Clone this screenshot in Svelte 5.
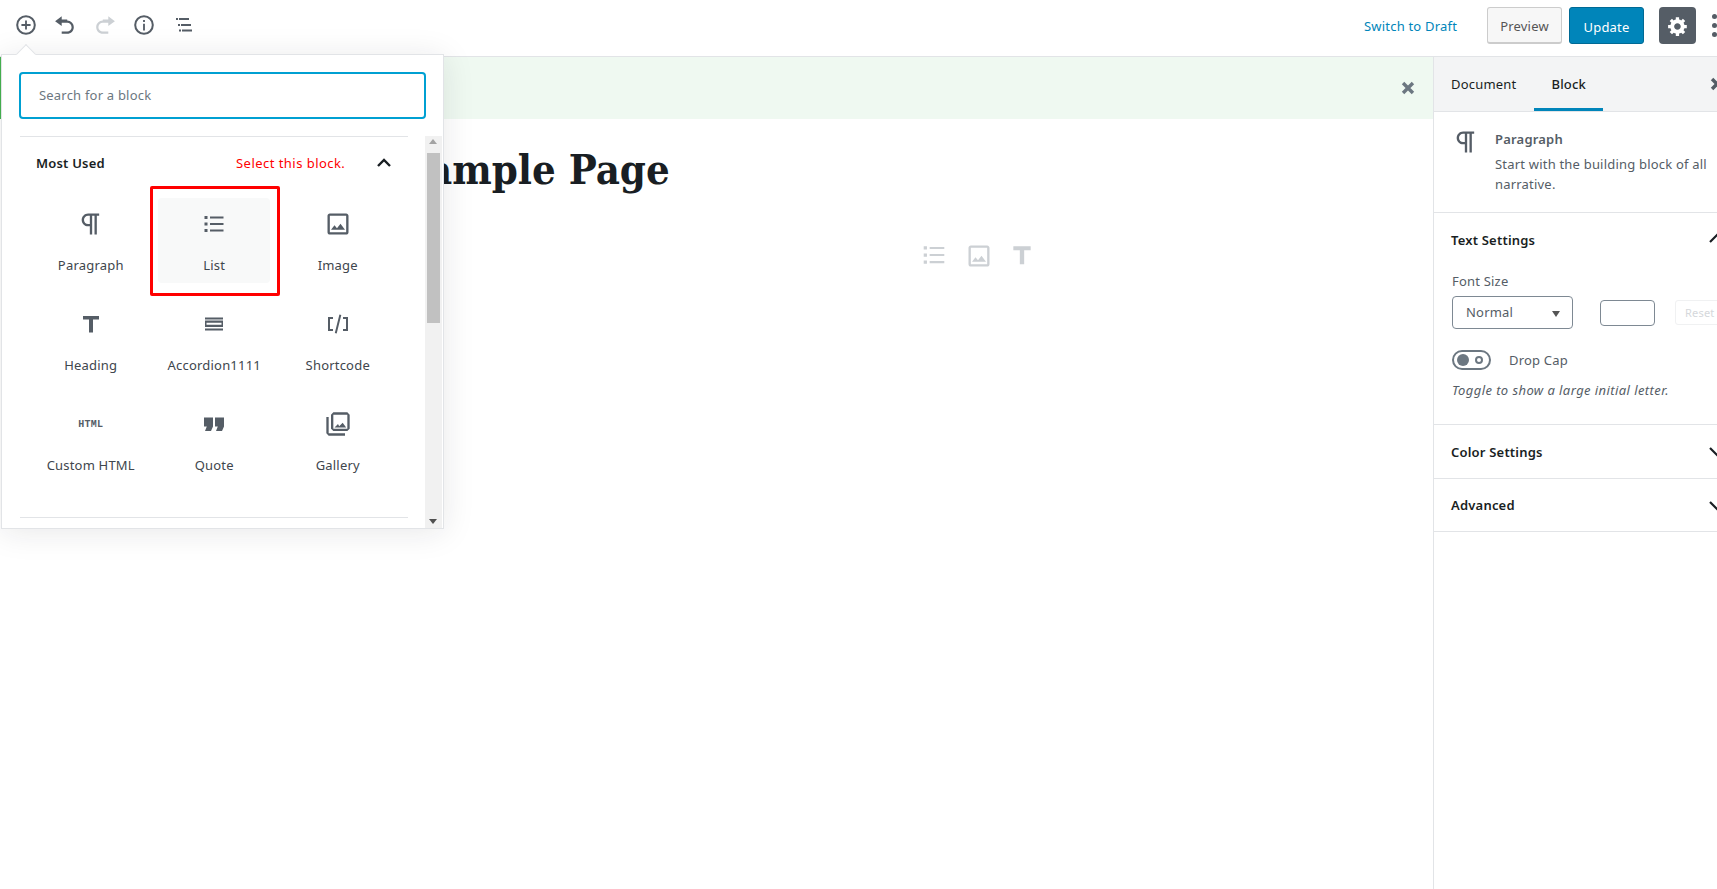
<script>
const blocks = [
  { name: 'Paragraph', icon: 'paragraph' },
  { name: 'List', icon: 'list', active: true },
  { name: 'Image', icon: 'image' },
  { name: 'Heading', icon: 'heading' },
  { name: 'Accordion1111', icon: 'accordion' },
  { name: 'Shortcode', icon: 'shortcode' },
  { name: 'Custom HTML', icon: 'html' },
  { name: 'Quote', icon: 'quote' },
  { name: 'Gallery', icon: 'gallery' }
]
</script>

{#snippet glyph(name)}
  {#if name === 'paragraph'}
    <svg class="i24 big" viewBox="0 0 24 24"><path d="M11 5v7H9.5C7.6 12 6 10.4 6 8.5S7.6 5 9.5 5H11m8-2H9.5C6.5 3 4 5.5 4 8.5S6.5 14 9.5 14H11v7h2V5h2v16h2V5h2V3z"/></svg>
  {:else if name === 'list'}
    <svg class="i24" viewBox="0 0 24 24"><path d="M2.500 4h3v3h-3zM2.500 10.500h3v3h-3zM2.500 17h3v3h-3zM8 4.500h13.500v2H8zM8 11h13.500v2H8zM8 17.500h13.500v2H8z"/></svg>
  {:else if name === 'image'}
    <svg class="i24 big" viewBox="0 0 24 24"><path d="m19 5v14h-14v-14h14m0-2h-14c-1.100 0-2 .9-2 2v14c0 1.100.9 2 2 2h14c1.100 0 2-.9 2-2v-14c0-1.100-.9-2-2-2z"/><path d="m14.140 11.860l-3 3.870-2.140-2.590-3 3.860h12l-3.860-5.140z"/></svg>
  {:else if name === 'heading'}
    <svg class="i24" viewBox="0 0 24 24"><path d="M4 4v3.500h6v13h4v-13h6V4z"/></svg>
  {:else if name === 'accordion'}
    <svg class="i24" viewBox="0 0 24 24"><path fill-rule="evenodd" d="M3 5.500h18v2H3zM3 16.500h18v2H3zM3 8.500h18v6.500H3zM4.500 10.700v2h15v-2z"/></svg>
  {:else if name === 'shortcode'}
    <svg class="i24" viewBox="0 0 24 24"><path d="M10.700 21.500l-1.900-.5 4.600-18.500 1.900.5zM2 5h5v2H4v10h3v2H2zM22 5h-5v2h3v10h-3v2h5z"/></svg>
  {:else if name === 'html'}
    <span class="htmlmark">HTML</span>
  {:else if name === 'quote'}
    <svg class="i24" viewBox="0 0 24 24"><path d="M2 5.500h9v9l-2 4.500H3l1.800-4.500H2zM13 5.500h9v9l-2 4.500h-6l1.800-4.500H13z"/></svg>
  {:else if name === 'gallery'}
    <svg class="i24 big" viewBox="0 0 24 24"><path d="M20 4v12H8V4h12m0-2H8L6 4v12l2 2h12l2-2V4l-2-2z"/><path d="M12 12l1 2 3-3 3 4H9z"/><path d="M2 6v14l2 2h14v-2H4V6H2z"/></svg>
  {/if}
{/snippet}

{#snippet cross()}
  <path d="M4.500 4.500l11 11M15.500 4.500l-11 11" fill="none" stroke="currentColor" stroke-width="3.800"/>
{/snippet}

<div class="app">
  <header class="topbar">
    <div class="tools">
      <svg class="tool" viewBox="0 0 24 24"><circle cx="12" cy="12" r="9.600" fill="none" stroke="currentColor" stroke-width="2.200"/><path d="M11 7h2v4h4v2h-4v4h-2v-4H7v-2h4z"/></svg>
      <svg class="tool" viewBox="0 0 20 20"><path d="M12 5H7V2L1 6.500 7 11V8h5c2.200 0 4 1.800 4 4s-1.800 4-4 4H7v2h5c3.300 0 6-2.700 6-6s-2.700-6-6-6z"/></svg>
      <svg class="tool off" viewBox="0 0 20 20"><path d="M8 5h5V2l6 4.500-6 4.500V8H8c-2.200 0-4 1.800-4 4s1.800 4 4 4h5v2H8c-3.300 0-6-2.700-6-6s2.700-6 6-6z"/></svg>
      <svg class="tool" viewBox="0 0 24 24"><circle cx="12" cy="12" r="9.600" fill="none" stroke="currentColor" stroke-width="2.200"/><path d="M11 10.500h2V18h-2zM11 6.500h2v2.200h-2z"/></svg>
      <svg class="tool" viewBox="0 0 22 22"><path d="M4 4h2v2H4zM7 4h10v2H7zM6 10h2v2H6zM9 10h10v2H9zM7 15.500h2v2H7zM10 15.500h10v2H10z"/></svg>
    </div>
    <div class="actions">
      <a class="draft" href="#top">Switch to Draft</a>
      <button class="btn preview">Preview</button>
      <button class="btn update">Update</button>
      <button class="gear" aria-label="Settings">
        <svg viewBox="0 0 20 20"><path d="M18 12h-2.180c-.170.700-.440 1.350-.810 1.930l1.540 1.540-2.100 2.100-1.540-1.540c-.580.360-1.230.630-1.910.790V19H8v-2.180c-.680-.160-1.330-.430-1.910-.790l-1.540 1.540-2.120-2.120 1.540-1.540c-.360-.580-.630-1.230-.790-1.910H1V9.030h2.170c.160-.700.440-1.350.800-1.940L2.430 5.550l2.100-2.100 1.540 1.540c.580-.370 1.240-.640 1.930-.810V2h3v2.180c.680.160 1.330.430 1.910.790l1.540-1.540 2.120 2.120-1.540 1.540c.360.590.640 1.240.800 1.940H18V12zm-8.500 1.500c1.660 0 3-1.340 3-3s-1.340-3-3-3-3 1.340-3 3 1.340 3 3 3z"/></svg>
      </button>
      <div class="dots"><i></i><i></i><i></i></div>
    </div>
  </header>

  <div class="body">
    <main class="editor">
      <div class="notice">
        <svg class="notice-x" viewBox="0 0 20 20">{@render cross()}</svg>
      </div>
      <h1 class="title">Sample Page</h1>
      <div class="ghost">
        {@render glyph('list')}
        {@render glyph('image')}
        {@render glyph('heading')}
      </div>
    </main>

    <aside class="sidebar">
      <div class="tabs">
        <span class="tab">Document</span>
        <span class="tab on">Block</span>
        <svg class="tabs-x" viewBox="0 0 20 20">{@render cross()}</svg>
      </div>
      <div class="card">
        {@render glyph('paragraph')}
        <div>
          <div class="card-title">Paragraph</div>
          <div class="card-desc">Start with the building block of all narrative.</div>
        </div>
      </div>
      <section class="panel">
        <div class="panel-head"><span>Text Settings</span><svg class="chev" viewBox="0 0 20 20"><path d="M3 13l7-7 7 7" /></svg></div>
        <div class="panel-body">
          <div class="label">Font Size</div>
          <div class="size-row">
            <div class="select">Normal<span class="caret"></span></div>
            <div class="num"></div>
            <div class="reset">Reset</div>
          </div>
          <div class="toggle-row">
            <span class="toggle"><i class="knob"></i><i class="ring"></i></span>
            <span class="toggle-label">Drop Cap</span>
          </div>
          <div class="help">Toggle to show a large initial letter.</div>
        </div>
      </section>
      <section class="panel closed">
        <div class="panel-head"><span>Color Settings</span><svg class="chev" viewBox="0 0 20 20"><path d="M3 7l7 7 7-7" /></svg></div>
      </section>
      <section class="panel closed">
        <div class="panel-head"><span>Advanced</span><svg class="chev" viewBox="0 0 20 20"><path d="M3 7l7 7 7-7" /></svg></div>
      </section>
    </aside>
  </div>

  <div class="popover">
    <div class="search">Search for a block</div>
    <div class="list">
      <div class="list-inner">
        <div class="group-head">
          <span class="group-title">Most Used</span>
          <span class="hint">Select this block.</span>
          <svg class="group-chev" viewBox="0 0 20 20"><path d="M4 13l6-6 6 6" /></svg>
        </div>
        <div class="grid">
          {#each blocks as b}
            <div class="item" class:active={b.active}>
              <div class="item-icon">{@render glyph(b.icon)}</div>
              <div class="item-name">{b.name}</div>
            </div>
          {/each}
        </div>
      </div>
      <div class="scroll">
        <span class="arrow up"></span>
        <span class="thumb"></span>
        <span class="arrow down"></span>
      </div>
    </div>
  </div>
</div>

<style>
:global(body) {
  margin: 0;
  background: #fff;
}
.app {
  position: relative;
  width: 1717px;
  height: 889px;
  overflow: hidden;
  font-family: "Noto Sans", sans-serif;
  font-size: 13px;
  letter-spacing: .2px;
  color: #191e23;
}
svg { fill: currentColor; display: block; }

.topbar {
  display: flex;
  justify-content: space-between;
  height: 57px;
  box-sizing: border-box;
  padding-bottom: 5px;
  border-bottom: 1px solid #e2e4e7;
}
.tools {
  display: flex;
  align-items: center;
  gap: 17.300px;
  padding-left: 15px;
  padding-bottom: 1px;
  color: #555d66;
}
.tool { width: 22px; height: 22px; }
.tool.off { color: #ccd0d4; }
.actions {
  display: flex;
  align-items: center;
  width: 353px;
  flex: none;
}
.draft { color: #0085ba; text-decoration: none; width: 123px; }
.btn {
  width: 75px;
  height: 37px;
  box-sizing: border-box;
  border-radius: 3px;
  font: inherit;
  letter-spacing: inherit;
  padding: 2px 0 0;
}
.preview {
  background: #f7f7f7;
  border: 1px solid #ccc;
  border-bottom-width: 2px;
  color: #555;
  margin-right: 7px;
}
.update {
  background: #0085ba;
  border: 1px solid #006a95;
  color: #fff;
}
.gear {
  width: 37px;
  height: 37px;
  margin-left: 15px;
  padding: 0;
  border: 0;
  border-radius: 4px;
  background: #555d66;
  color: #fff;
  display: flex;
  align-items: center;
  justify-content: center;
}
.gear svg { width: 22px; height: 22px; }
.dots { margin-left: 16px; display: grid; gap: 4px; }
.dots i { display: block; width: 5px; height: 5px; border-radius: 50%; background: #555d66; }

.body { display: flex; height: 832px; }
.editor { flex: 0 0 1433px; box-sizing: border-box; }
.notice {
  height: 62px;
  background: #eff9f1;
  border-left: 4px solid #46b450;
  display: flex;
  align-items: center;
  justify-content: flex-end;
  padding-right: 16px;
  color: #6c7781;
}
.notice-x { width: 18px; height: 18px; }
.title {
  margin: 21px 0 0 401px;
  font-family: "DejaVu Serif Condensed", "DejaVu Serif", serif;
  font-weight: 700;
  font-size: 41.500px;
  line-height: 60px;
  letter-spacing: 0;
  color: #191e23;
}
.ghost {
  display: flex;
  gap: 18px;
  margin: 42px 0 0 921px;
  color: #ccd0d4;
}
.ghost .i24 { width: 26px; height: 26px; }
.ghost .i24:last-child { margin-left: -2px; }

.sidebar {
  flex: 0 0 300px;
  border-left: 1px solid #e2e4e7;
  box-sizing: border-box;
}
.tabs {
  position: relative;
  display: flex;
  height: 55px;
  box-sizing: border-box;
  background: #f3f4f5;
  border-bottom: 1px solid #e2e4e7;
}
.tab {
  display: flex;
  align-items: center;
  padding: 0 17px;
  height: 54px;
  box-sizing: border-box;
}
.tab.on {
  margin-left: 1px;
  font-weight: 500;
  border-bottom: 3px solid #0085ba;
  padding-top: 3px;
}
.tabs-x { position: absolute; left: 274px; top: 18px; width: 18px; height: 18px; color: #555d66; }
.card {
  display: flex;
  gap: 15px;
  padding: 16px 20px 16px 18px;
  height: 101px;
  box-sizing: border-box;
  border-bottom: 1px solid #e2e4e7;
  color: #555d66;
}
.card .i24 { width: 28px; height: 28px; flex: none; }
.card-title { font-weight: 600; line-height: 20px; margin: 1px 0 5px; }
.card-desc { line-height: 20px; width: 228px; }
.panel {
  padding: 0 16px 0 17px;
  border-bottom: 1px solid #e2e4e7;
  height: 212px;
  box-sizing: border-box;
}
.panel.closed { height: 53.500px; }
.panel-head {
  position: relative;
  display: flex;
  align-items: center;
  height: 53px;
  font-weight: 600;
}
.panel-body { padding-left: 1px; }
.chev {
  position: absolute;
  left: 256px;
  top: 16px;
  width: 20px;
  height: 20px;
  fill: none;
  stroke: #191e23;
  stroke-width: 2.200;
}
.label { margin-top: 6px; color: #555d66; line-height: 18px; }
.size-row { display: flex; align-items: center; margin-top: 6px; }
.select {
  position: relative;
  width: 121px;
  height: 33px;
  box-sizing: border-box;
  border: 1px solid #7e8993;
  border-radius: 4px;
  padding-left: 13px;
  line-height: 31px;
  color: #555d66;
}
.caret {
  position: absolute;
  right: 12px;
  top: 14px;
  border: 4px solid transparent;
  border-top: 6px solid #555;
  border-bottom: 0;
}
.num {
  width: 55px;
  height: 26px;
  box-sizing: border-box;
  margin-left: 27px;
  border: 1px solid #7e8993;
  border-radius: 4px;
}
.reset {
  width: 60px;
  height: 25px;
  box-sizing: border-box;
  margin-left: 20px;
  border: 1px solid #f0f1f2;
  border-radius: 3px;
  padding-left: 9px;
  font-size: 11px;
  line-height: 23px;
  color: #d5d8db;
}
.toggle-row { display: flex; align-items: center; margin-top: 21px; gap: 18px; color: #555d66; }
.toggle {
  position: relative;
  display: block;
  width: 39px;
  height: 20px;
  box-sizing: border-box;
  border: 2px solid #6c7781;
  border-radius: 10px;
}
.knob { position: absolute; left: 3px; top: 2px; width: 12px; height: 12px; border-radius: 50%; background: #6c7781; }
.ring { position: absolute; right: 6px; top: 4px; width: 8px; height: 8px; box-sizing: border-box; border: 2px solid #6c7781; border-radius: 50%; }
.help { margin-top: 11px; font-style: italic; color: #555d66; letter-spacing: .42px; line-height: 18px; }

.popover {
  position: absolute;
  left: 1px;
  top: 54px;
  width: 443px;
  height: 475px;
  box-sizing: border-box;
  background: #fff;
  border: 1px solid #e2e4e7;
  box-shadow: 0 3px 30px rgba(25, 30, 35, .1);
}
.popover::before {
  content: "";
  position: absolute;
  left: 17px;
  top: -8px;
  width: 13px;
  height: 13px;
  background: #fff;
  border-left: 1px solid #e2e4e7;
  border-top: 1px solid #e2e4e7;
  transform: rotate(45deg);
}
.search {
  margin: 17px 17px 17px 17px;
  height: 47px;
  box-sizing: border-box;
  border: 2px solid #00a0d2;
  border-radius: 4px;
  padding-left: 18px;
  line-height: 43px;
  color: #6c7781;
  position: relative;
}
.list {
  position: relative;
  display: flex;
  height: 392px;
}
.list-inner {
  width: 388px;
  margin-left: 18px;
  border-top: 1px solid #e2e4e7;
  border-bottom: 1px solid #e2e4e7;
  height: 382px;
  box-sizing: border-box;
}
.scroll {
  position: absolute;
  right: 1px;
  top: 0;
  bottom: 0;
  width: 17px;
  background: #f1f1f1;
}
.arrow { position: absolute; left: 4px; border: 4px solid transparent; }
.arrow.up { top: 3px; border-top: 0; border-bottom: 5px solid #a3a3a3; }
.arrow.down { bottom: 4px; border-bottom: 0; border-top: 5px solid #505050; }
.thumb { position: absolute; top: 17px; left: 2px; width: 13px; height: 170px; background: #c1c1c1; }
.group-head {
  position: relative;
  height: 61px;
  padding: 17px 0 0 16px;
  box-sizing: border-box;
  line-height: 18px;
}
.group-title { font-weight: 600; }
.hint { position: absolute; left: 216px; color: #f00; letter-spacing: .46px; }
.group-chev {
  position: absolute;
  left: 354px;
  top: 16px;
  width: 20px;
  height: 20px;
  fill: none;
  stroke: #191e23;
  stroke-width: 2.400;
}
.grid {
  display: grid;
  grid-template-columns: repeat(3, 123.500px);
  grid-auto-rows: 100px;
  margin-left: 9px;
}
.item {
  position: relative;
  display: flex;
  flex-direction: column;
  align-items: center;
  color: #555d66;
  padding-top: 11px;
  box-sizing: border-box;
}
.item.active::before {
  content: "";
  position: absolute;
  left: 5px;
  right: 6px;
  top: 0;
  height: 85px;
  background: #f8f9f9;
  border-radius: 4px;
}
.item.active::after {
  content: "";
  position: absolute;
  left: -3px;
  top: -12px;
  width: 130px;
  height: 110px;
  box-sizing: border-box;
  border: 3px solid #f00;
  border-radius: 2px;
}
.item-icon {
  position: relative;
  width: 24px;
  height: 30px;
  display: flex;
  align-items: center;
  justify-content: center;
}
.i24 { width: 24px; height: 24px; flex: none; }
.i24.big { width: 28px; height: 28px; }
.htmlmark {
  font-family: "Liberation Mono", monospace;
  font-weight: 700;
  font-size: 10px;
  letter-spacing: .3px;
  color: #555d66;
}
.item-name { position: relative; margin-top: 17px; color: #40464d; line-height: 18px; }
</style>
